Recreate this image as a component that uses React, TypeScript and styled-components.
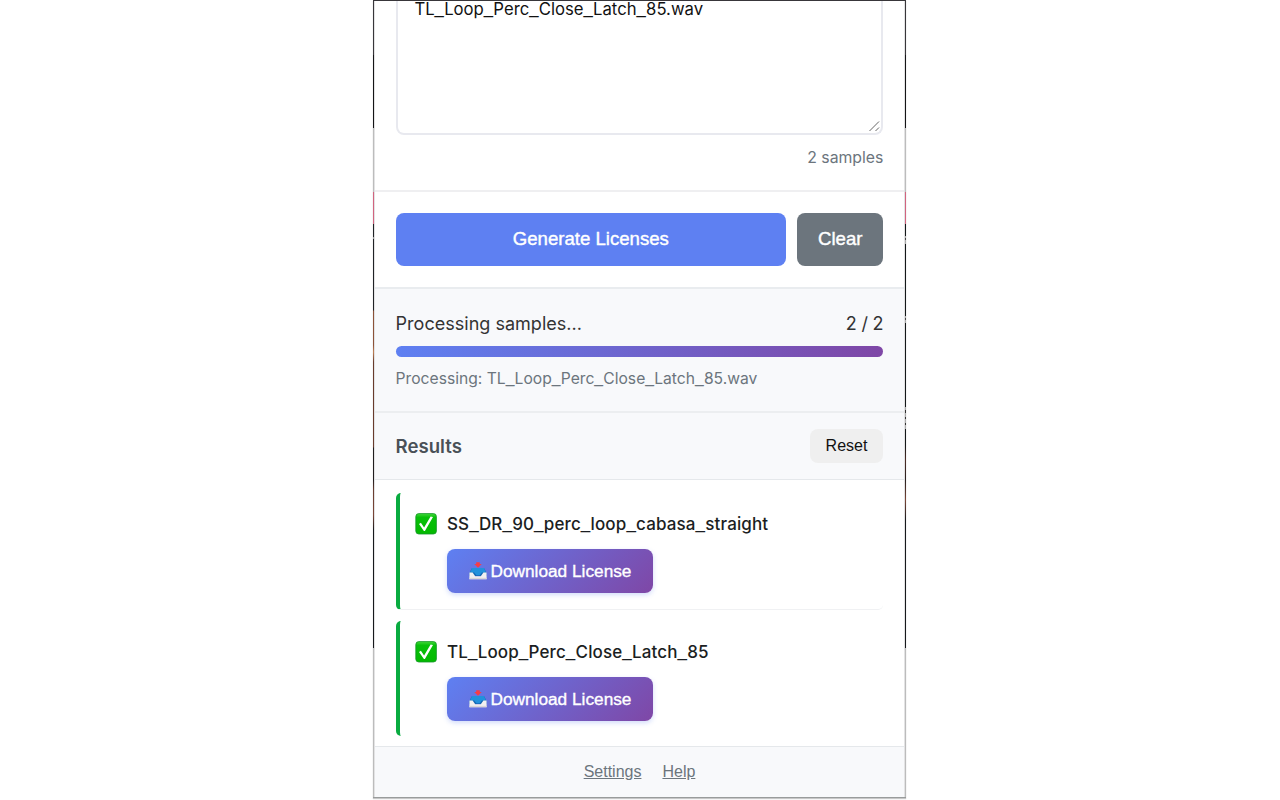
import React, { Fragment } from "react";
import styled, { createGlobalStyle } from "styled-components";

const Global = createGlobalStyle`
  * { box-sizing: border-box; }
  body { margin: 0; background: #fff; overflow: hidden; }
`;
const sans = `Inter, "Liberation Sans", sans-serif`;
const arial = `"Liberation Sans", Arial, sans-serif`;
const brand = `linear-gradient(135deg, #5e80f2 0%, #7f47a6 100%)`;

const Page = styled.div`
  height: 800px;
  padding-left: 373px;
  font-family: ${sans};
`;
const leftEdge = `linear-gradient(
  #38363a 0 55px, #141416 55px 128px, #bcbcbc 128px 192px, #d2647f 192px 224px,
  #202225 224px 237px, #999 237px 239px, #202225 239px 310px, #8c5238 311px 345px,
  #c08055 352px, #683b2c 362px 447px, #201d1e 448px 480px, #693d30 490px,
  #7b4636 515px, #17191c 530px 648px, #bcbcbc 648px
)`;
const rightEdge = `linear-gradient(
  #38363a 0 55px, #141416 55px 128px, #bcbcbc 128px 192px, #d2647f 192px 224px,
  #141819 224px 236px, #aaa 236px 238px, #444 238px 240px, #aaa 240px 244px,
  #141819 244px 316px, #aaa 316px 318px, #444 318px 320px, #aaa 320px 323px,
  #141819 323px 407px, #aaa 407px 410px, #333 410px 413px, #aaa 413px 417px,
  #333 417px 419px, #aaa 419px 423px, #333 423px 425px, #aaa 425px 429px,
  #141819 429px 445px, #4c2c25 460px, #28201f 480px, #7b4636 500px,
  #17191c 520px 648px, #bcbcbc 648px
)`;
const Frame = styled.div`
  width: 533px;
  height: 798px;
  padding: 1px 1px 0;
  border-bottom: 1px solid #999c9c;
  box-shadow: 0 1px 1px rgba(0, 0, 0, 0.22);
  background:
    linear-gradient(#38363a, #38363a) top / 100% 1px no-repeat,
    ${leftEdge} left / 1px 100% no-repeat,
    ${rightEdge} right / 1px 100% no-repeat;
`;
const Popup = styled.main`
  height: 796px;
  display: flex;
  flex-direction: column;
  background: #fff;
  border: solid #e3e3e4;
  border-width: 0 1px;
`;
const InputSection = styled.section`
  height: 191px;
  padding: 0 20.6px;
  border-bottom: 2px solid #efeff1;
  flex: none;
`;
const SampleBox = styled.div`
  position: relative;
  height: 134px;
  border: 2px solid #e8e9ef;
  border-top: 0;
  border-radius: 0 0 8px 8px;
  padding: 0 16.8px;
  font-size: 16.7px;
  line-height: 17px;
  color: #111;
`;
const Grip = styled.svg`
  position: absolute;
  right: 0;
  bottom: 0;
`;
const Count = styled.div`
  margin-top: 13px;
  line-height: 20px;
  text-align: right;
  color: #6c757d;
  font-size: 15.8px;
`;
const Actions = styled.section`
  flex: none;
  display: flex;
  gap: 11px;
  height: 97px;
  padding: 21px 20.6px 22px;
  border-bottom: 2px solid #e9ecef;
`;
const Action = styled.button<{ $primary?: boolean }>`
  flex: ${(p) => (p.$primary ? "1" : "0 0 86.4px")};
  height: 53px;
  padding: 0 0 2px;
  border: 0;
  border-radius: 8px;
  background: ${(p) => (p.$primary ? "#5e80f2" : "#6c757d")};
  color: #fff;
  font: 18.6px ${arial};
  -webkit-text-stroke: 0.4px #fff;
`;
const Progress = styled.section`
  flex: none;
  height: 124px;
  padding: 23px 20.6px 0;
  background: #f8f9fb;
  border-bottom: 2px solid #eceef0;
`;
const ProgressHead = styled.div`
  display: flex;
  justify-content: space-between;
  line-height: 24px;
  font-size: 18.05px;
  color: #333;
`;
const Total = styled.span`
  letter-spacing: -0.2px;
`;
const Track = styled.div`
  height: 11px;
  margin-top: 10px;
  border-radius: 6px;
  background: linear-gradient(90deg, #5e80f2, #7f47a6);
`;
const Current = styled.div`
  margin-top: 12px;
  line-height: 20px;
  font-size: 15.65px;
  color: #6c757d;
`;
const ResultsHead = styled.header`
  flex: none;
  height: 67px;
  padding: 0 21px 0 20.6px;
  display: flex;
  align-items: center;
  justify-content: space-between;
  background: #f8f9fb;
  border-bottom: 1px solid #e5e8eb;
`;
const Title = styled.h3`
  margin: 0;
  font-size: 18.6px;
  font-weight: 600;
  color: #495057;
`;
const Reset = styled.button`
  width: 73px;
  height: 34px;
  padding: 0;
  border: 0;
  border-radius: 8px;
  background: #efefef;
  color: #111;
  font: 16px ${arial};
`;
const List = styled.div`
  flex: 1;
  padding: 13px 20.6px 0;
  display: flex;
  flex-direction: column;
  gap: 11px;
`;
const Item = styled.article<{ $last?: boolean }>`
  height: ${(p) => (p.$last ? 115 : 117)}px;
  padding: 19px 0 0 15.4px;
  border-left: 4px solid #09ab40;
  border-bottom: ${(p) => (p.$last ? "0" : "1px solid #f0f1f3")};
  border-radius: 5px;
`;
const NameRow = styled.div`
  display: flex;
  align-items: center;
  gap: 10px;
  height: 23px;
  font-size: 17px;
  font-weight: 500;
  letter-spacing: 0.12px;
  color: #1b1e22;
`;
const Underscore = styled.span`
  font-family: ${arial};
  font-weight: 400;
  letter-spacing: 0.25px;
  line-height: 0;
  vertical-align: 1px;
`;
const Download = styled.button`
  width: 206px;
  height: 43.6px;
  margin: 14px 0 0 32px;
  padding: 1px 0 0;
  display: flex;
  align-items: center;
  justify-content: center;
  gap: 4px;
  border: 0;
  border-radius: 8px;
  background: ${brand};
  box-shadow: 0 2px 5px rgba(94, 128, 242, 0.28);
  color: #fff;
  font: 17.25px ${arial};
  -webkit-text-stroke: 0.35px #fff;
`;
const Footer = styled.footer`
  flex: none;
  height: 51px;
  border-top: 1px solid #e5e8eb;
  background: #f8f9fb;
  display: flex;
  align-items: center;
  justify-content: center;
  gap: 21px;
`;
const Link = styled.a`
  color: #6c757d;
  font: 16px ${arial};
  text-decoration: underline;
`;

const Check = () => (
  <svg width="22" height="22" viewBox="0 0 22 22">
    <defs>
      <linearGradient id="green" x2="0" y2="1">
        <stop stopColor="#45d93c" />
        <stop offset=".18" stopColor="#08c00a" />
        <stop offset="1" stopColor="#03b900" />
      </linearGradient>
    </defs>
    <rect x=".8" y=".6" width="20.6" height="20.4" rx="3" fill="url(#green)" stroke="#14952a" strokeWidth=".8" />
    <path d="M4 11.1 5.9 9.7 9.1 14.4 15.6 3.6 18 4.1 9.9 18 8.9 18Z" fill="#fff" />
  </svg>
);
const Tray = () => (
  <svg width="18" height="18" viewBox="0 0 18 18">
    <path d="M3 6h12l2.6 5v3H.4v-3Z" fill="#1668b4" />
    <path d="M3 6h12l2 4.6h-4.2l-2.2 2.6H7.4l-2.2-2.6H1Z" fill="#2191dc" />
    <path d="M.4 10.6h3.2l2.6 3.6h5.6l2.6-3.6h3.2v6.6H.4Z" fill="#f1f0f0" />
    <path d="M.4 15.8h17.2v1.4H.4Z" fill="#d9d6d8" />
    <path d="M7.2.2h3.6v1.7h1.9L9 5.8 5.3 1.9h1.9Z" fill="#f73c46" />
  </svg>
);

const FileName = ({ children }: { children: string }) => (
  <span>
    {children.split("_").map((part, i) => (
      <Fragment key={i}>
        {i > 0 && <Underscore>_</Underscore>}
        {part}
      </Fragment>
    ))}
  </span>
);

const samples = ["SS_DR_90_perc_loop_cabasa_straight", "TL_Loop_Perc_Close_Latch_85"];

export default function App() {
  return (
    <Page>
      <Global />
      <Frame>
        <Popup>
          <InputSection>
            <SampleBox>
              <FileName>TL_Loop_Perc_Close_Latch_85.wav</FileName>
              <Grip width="14" height="14" viewBox="0 0 14 14">
                <path d="M2.5 12 12 2.5M8.5 12 12 8.5" stroke="#666" fill="none" />
              </Grip>
            </SampleBox>
            <Count>2 samples</Count>
          </InputSection>
          <Actions>
            <Action $primary>Generate Licenses</Action>
            <Action>Clear</Action>
          </Actions>
          <Progress>
            <ProgressHead><span>Processing samples...</span><Total>2 / 2</Total></ProgressHead>
            <Track />
            <Current>Processing: <FileName>TL_Loop_Perc_Close_Latch_85.wav</FileName></Current>
          </Progress>
          <ResultsHead><Title>Results</Title><Reset>Reset</Reset></ResultsHead>
          <List>
            {samples.map((name, i) => (
              <Item key={name} $last={i === samples.length - 1}>
                <NameRow><Check /><FileName>{name}</FileName></NameRow>
                <Download><Tray /><span>Download License</span></Download>
              </Item>
            ))}
          </List>
          <Footer><Link>Settings</Link><Link>Help</Link></Footer>
        </Popup>
      </Frame>
    </Page>
  );
}
